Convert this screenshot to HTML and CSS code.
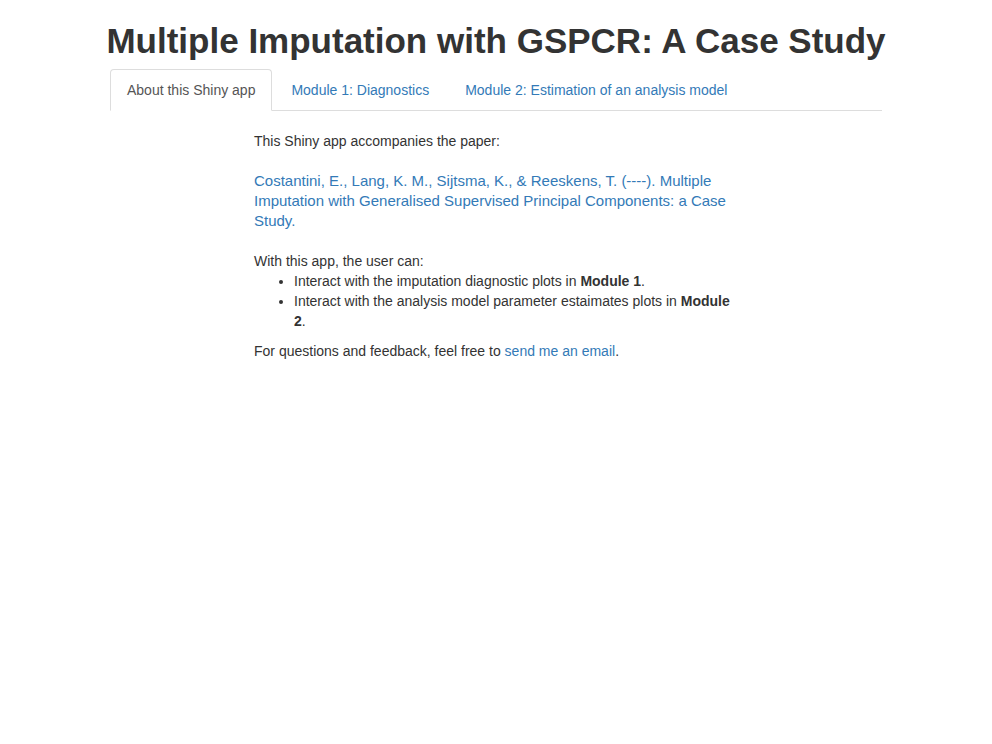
FILE: index.html
```html
<!DOCTYPE html>
<html>
<head>
<meta charset="utf-8">
<link rel="stylesheet" href="styles.css">
</head>
<body>
<h1 class="title">Multiple Imputation with GSPCR: A Case Study</h1>
<div class="page">
  <ul class="tabs">
    <li class="tab active"><a href="#">About this Shiny app</a></li>
    <li class="tab"><a href="#">Module 1: Diagnostics</a></li>
    <li class="tab"><a href="#">Module 2: Estimation of an analysis model</a></li>
  </ul>
  <div class="content">
    <p class="para">This Shiny app accompanies the paper:</p>
    <p class="para cite"><a href="#">Costantini, E., Lang, K. M., Sijtsma, K., &amp; Reeskens, T. (----). Multiple Imputation with Generalised Supervised Principal Components: a Case Study.</a></p>
    <p class="lead-in">With this app, the user can:</p>
    <ul class="list">
      <li>Interact with the imputation diagnostic plots in <b>Module 1</b>.</li>
      <li>Interact with the analysis model parameter estaimates plots in <b>Module 2</b>.</li>
    </ul>
    <p class="last">For questions and feedback, feel free to <a href="#">send me an email</a>.</p>
  </div>
</div>
</body>
</html>
```

FILE: styles.css
```css
html, body {
  margin: 0;
  padding: 0;
  background: #fff;
}
body {
  font-family: "Liberation Sans", Arial, sans-serif;
  font-size: 14px;
  line-height: 20px;
  color: #333;
}
a {
  color: #337ab7;
  text-decoration: none;
}
.title {
  margin: 21px 0 8px;
  text-align: center;
  font-size: 35px;
  line-height: 40px;
  font-weight: bold;
  color: #333;
}
.page {
  width: 772px;
  margin: 0 auto;
  display: flex;
  flex-direction: column;
}
.tabs {
  list-style: none;
  margin: 0;
  padding: 0;
  display: flex;
  border-bottom: 1px solid #ddd;
}
.tab {
  margin-bottom: -1px;
  margin-right: 2px;
}
.tab a {
  display: block;
  padding: 10px 16px;
  line-height: 20px;
  border: 1px solid transparent;
  border-radius: 4px 4px 0 0;
}
.tab.active a {
  color: #555;
  background: #fff;
  border-color: #ddd #ddd transparent;
}
.content {
  width: 486px;
  margin-left: 144px;
  padding-top: 20px;
}
.para {
  margin: 0 0 20px;
}
.cite {
  font-size: 15px;
}
.lead-in {
  margin: 0;
}
.list {
  margin: 0 0 10px;
  padding-left: 40px;
}
.last {
  margin: 0 0 10px;
}
```
